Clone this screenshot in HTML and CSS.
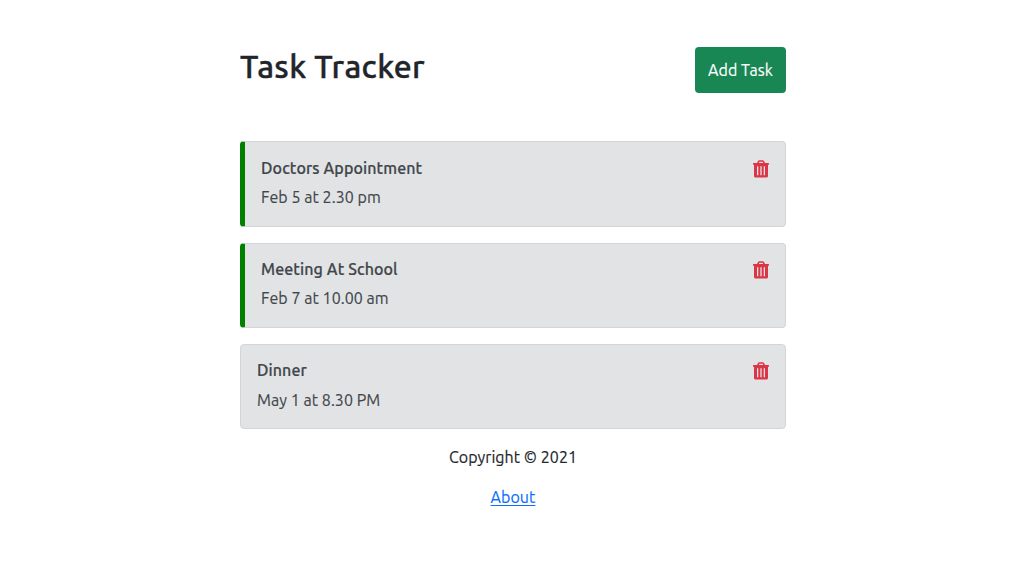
FILE: index.html
```html
<!DOCTYPE html>
<html lang="en">
<head>
<meta charset="utf-8">
<title>Task Tracker</title>
<link rel="stylesheet" href="styles.css">
</head>
<body>
<svg class="sprite" aria-hidden="true">
<symbol id="trash" viewBox="0 0 16 18"><path fill-rule="evenodd" d="M.5 3H4l1-2Q5.400 .3 6.300 .3h3.400q.9 0 1.300.7l1 2h3.500q.5 0 .5.500v.7q0 .5-.5.5H15V16q0 1.600-1.600 1.600H2.600Q1 17.600 1 16V4.700H.5Q0 4.700 0 4.200v-.7Q0 3 .5 3zM5.700 3h4.600l-.7-1.300H6.400zM4 6.200v9h1.300v-9zm3.350 0v9h1.300v-9zm3.350 0v9H12v-9z"/></symbol>
</svg>
<main class="container">
<header class="header"><h1 class="title">Task Tracker</h1><button class="add">Add Task</button></header>
<section class="tasks">
<article class="task reminder"><div><h2 class="name">Doctors Appointment</h2><p class="date">Feb 5 at 2.30 pm</p></div><svg class="icon"><use href="#trash"/></svg></article>
<article class="task reminder"><div><h2 class="name">Meeting At School</h2><p class="date">Feb 7 at 10.00 am</p></div><svg class="icon"><use href="#trash"/></svg></article>
<article class="task"><div><h2 class="name">Dinner</h2><p class="date">May 1 at 8.30 PM</p></div><svg class="icon"><use href="#trash"/></svg></article>
</section>
<footer class="footer"><p class="copy">Copyright © 2021</p><a class="about" href="#">About</a></footer>
</main>
</body>
</html>
```
FILE: styles.css
```css
* { box-sizing: border-box; }
body { margin: 0; background: #fff; color: #212529; font: 16px/24px Ubuntu, "Open Sans", sans-serif; -webkit-text-stroke: .15px currentColor; }
.sprite { display: none; }
.container { width: 546px; margin-left: 240px; padding-top: 47px; }
.header { display: flex; justify-content: space-between; margin-bottom: 48px; }
.title { margin: 0 0 8px; font-size: 32px; line-height: 38.4px; font-weight: 500; letter-spacing: .36px; -webkit-text-stroke: .4px currentColor; }
.add { width: 91px; padding: 0; border: 0; border-radius: 4px; background: #198754; color: #fff; font: inherit; letter-spacing: .06px; }
.tasks { display: flex; flex-direction: column; gap: 16px; }
.task { display: flex; justify-content: space-between; padding: 16.15px 16px 16px; border: 1px solid #d3d6d8; border-radius: 4px; background: #e2e3e5; color: #41464b; }
.reminder { border-left: 5px solid green; }
.name { margin: 0 0 7.45px; font-size: 16px; line-height: 19.2px; font-weight: 500; letter-spacing: .1px; -webkit-text-stroke: .2px currentColor; }
.date { margin: 0 0 .4px; letter-spacing: .05px; }
.icon { width: 16px; height: 18px; margin-top: 1.45px; fill: #dc3545; -webkit-text-stroke: 0; }
.footer { text-align: center; padding-top: 16px; letter-spacing: .05px; }
.copy { margin: 0 0 16px; }
.about { color: #0d6efd; text-underline-offset: 2px; text-decoration-skip-ink: none; }
```
